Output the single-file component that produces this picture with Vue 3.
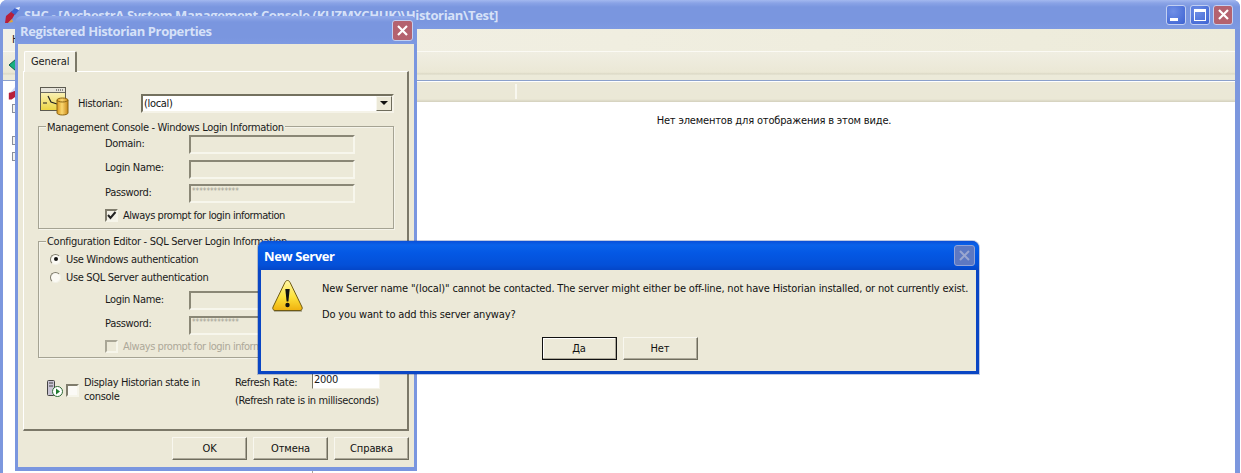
<script setup>
const loginFields = ['Domain:', 'Login Name:', 'Password:']
const sqlFields = ['Login Name:', 'Password:']
const maskedValue = '*************'
</script>

<template>
  <div class="desktop">
    <!-- Main console window -->
    <div class="win main-win">
      <div class="titlebar main-title">
        <svg class="app-logo" width="17" height="17" viewBox="0 0 17 17">
          <path d="M0 16 L1 9 L7 4 L10 7 L7 12 L3 16 Z" fill="#b81f3a" />
          <path d="M3 16 L7 12 L8 15 Z" fill="#e2a23a" />
          <path d="M6 5 L10 1 L14 3 L10 8 Z" fill="#3c62cf" />
          <path d="M10 1 L15 0 L14 3 Z" fill="#eef3fd" />
        </svg>
        <span class="main-title-text">SHC - [ArchestrA System Management Console (KUZMYCHUK)\Historian\Test]</span>
        <div class="caption-btns">
          <div class="cap cap-blue"><i class="min-glyph"></i></div>
          <div class="cap cap-blue"><i class="max-glyph"></i></div>
          <div class="cap cap-red">
            <svg width="13" height="13" viewBox="0 0 13 13"><path d="M2 2 L11 11 M11 2 L2 11" stroke="#fff" stroke-width="2.2" /></svg>
          </div>
        </div>
      </div>
      <div class="menubar"><span class="menu-item">Н</span></div>
      <div class="toolbar">
        <svg class="back-arrow" width="10" height="12" viewBox="0 0 10 12"><path d="M0 6 L7 0 V12 Z" fill="#18b080" stroke="#0c5a46" /></svg>
      </div>
      <div class="content">
        <div class="tree">
          <svg class="tree-logo" width="16" height="17" viewBox="0 0 17 17">
            <path d="M3 16 L3 9 L9 6 L13 9 L10 13 L6 16 Z" fill="#b81f3a" />
            <path d="M4 9 L11 1 L16 0 L14 6 L9 7 Z" fill="#cfdaf6" />
          </svg>
          <i class="expander e1"></i>
          <i class="expander e2"></i>
          <i class="expander e3"></i>
        </div>
        <div class="pane">
          <div class="list-header"><div class="col-a"></div><div class="col-b"></div></div>
          <div class="empty-msg">Нет элементов для отображения в этом виде.</div>
        </div>
      </div>
    </div>

    <!-- Registered Historian Properties -->
    <div class="win props-win">
      <div class="titlebar props-title">
        <span>Registered Historian Properties</span>
        <div class="cap cap-red props-close">
          <svg width="13" height="13" viewBox="0 0 13 13"><path d="M2 2 L11 11 M11 2 L2 11" stroke="#fff" stroke-width="2.2" /></svg>
        </div>
      </div>
      <div class="props-body">
        <div class="tab">General</div>
        <div class="panel">
          <div class="historian-row">
            <svg class="hist-icon" width="30" height="30" viewBox="0 0 30 30">
              <defs>
                <linearGradient id="winFill" x1="0" y1="0" x2="0" y2="1">
                  <stop offset="0" stop-color="#fdf9d8" />
                  <stop offset="1" stop-color="#ecd440" />
                </linearGradient>
                <linearGradient id="cylFill" x1="0" y1="0" x2="1" y2="0">
                  <stop offset="0" stop-color="#d99a1e" />
                  <stop offset="0.45" stop-color="#fbd871" />
                  <stop offset="1" stop-color="#c98818" />
                </linearGradient>
              </defs>
              <rect x="0.5" y="0.5" width="25" height="23" fill="url(#winFill)" stroke="#5c5a50" />
              <rect x="1" y="1" width="24" height="4" fill="#e6e4da" />
              <path d="M16 3 h8" stroke="#333" stroke-dasharray="1 1" />
              <path d="M1 5.5 H25" stroke="#6a6a60" />
              <path d="M8 9 L11 15 L17 17 M3 16 L7 16" stroke="#222" fill="none" stroke-width="1.2" />
              <path d="M17 13 a5.5 2 0 0 1 11 0 V26 a5.5 2 0 0 1 -11 0 Z" fill="url(#cylFill)" stroke="#8a6414" />
              <path d="M17 13 a5.5 2 0 0 0 11 0" fill="none" stroke="#8a6414" />
            </svg>
            <label class="hist-label">Historian:</label>
            <div class="combo">
              <span>(local)</span>
              <div class="combo-btn"><i></i></div>
            </div>
          </div>

          <div class="group group-one">
            <span class="legend">Management Console - Windows Login Information</span>
            <div v-for="name in loginFields" :key="name" class="field-row">
              <label>{{ name }}</label>
              <div class="field"><span v-if="name === 'Password:'" class="mask">{{ maskedValue }}</span></div>
            </div>
            <div class="check-row indented">
              <div class="check"><svg width="11" height="11" viewBox="0 0 11 11"><path d="M2 5 L4.5 8 L9.5 2" fill="none" stroke="#222" stroke-width="2" /></svg></div>
              <span>Always prompt for login information</span>
            </div>
          </div>

          <div class="group group-two">
            <span class="legend">Configuration Editor - SQL Server Login Information</span>
            <div class="radio-row"><div class="radio on"></div><span>Use Windows authentication</span></div>
            <div class="radio-row"><div class="radio"></div><span>Use SQL Server authentication</span></div>
            <div v-for="name in sqlFields" :key="name" class="field-row">
              <label>{{ name }}</label>
              <div class="field"><span v-if="name === 'Password:'" class="mask">{{ maskedValue }}</span></div>
            </div>
            <div class="check-row indented disabled">
              <div class="check"></div>
              <span>Always prompt for login information</span>
            </div>
          </div>

          <div class="bottom-row">
            <div class="state-col">
              <svg class="state-icon" width="16" height="18" viewBox="0 0 16 18">
                <rect x="0.5" y="0.5" width="7" height="15" rx="1" fill="#c9c4d4" stroke="#444" />
                <path d="M2 3 h4 M2 6 h4" stroke="#444" />
                <circle cx="10.5" cy="11.5" r="5" fill="#fff" stroke="#2c6a34" />
                <path d="M9 8.5 L13 11.5 L9 14.5 Z" fill="#1f7a2e" />
              </svg>
              <div class="check sunken-light"></div>
              <span class="state-label">Display Historian state in console</span>
            </div>
            <div class="refresh-col">
              <div class="refresh-line">
                <label>Refresh Rate:</label>
                <div class="rate-input">2000</div>
              </div>
              <div class="refresh-note">(Refresh rate is in milliseconds)</div>
            </div>
          </div>
        </div>
        <div class="props-footer">
          <button class="btn" type="button">OK</button>
          <button class="btn" type="button">Отмена</button>
          <button class="btn" type="button">Справка</button>
        </div>
      </div>
    </div>

    <!-- New Server message box -->
    <div class="win msg-win">
      <div class="titlebar msg-title">
        <span>New Server</span>
        <div class="cap msg-close">
          <svg width="13" height="13" viewBox="0 0 13 13"><path d="M2 2 L11 11 M11 2 L2 11" stroke="#9aa6cf" stroke-width="2" /></svg>
        </div>
      </div>
      <div class="msg-body">
        <div class="msg-main">
          <svg class="warn" width="33" height="35" viewBox="0 0 33 35">
            <defs>
              <linearGradient id="warnFill" x1="0" y1="0" x2="0" y2="1">
                <stop offset="0" stop-color="#fff6a6" />
                <stop offset="0.55" stop-color="#fde23a" />
                <stop offset="1" stop-color="#efb00e" />
              </linearGradient>
            </defs>
            <path d="M3 33 H31" stroke="#a8a48f" stroke-width="1.6" />
            <path d="M16.5 2.5 C18 2.5 18.5 3.5 19.1 4.5 L31 29 C31.8 31 30.6 32.5 29 32.5 H4 C2.4 32.5 1.2 31 2 29 L13.9 4.5 C14.5 3.5 15 2.5 16.5 2.5 Z" fill="url(#warnFill)" stroke="#6f5a12" />
            <path d="M14.3 11 H18.7 L17.4 23.5 H15.6 Z" fill="#111" />
            <circle cx="16.5" cy="27" r="2.2" fill="#111" />
          </svg>
          <div class="msg-text">
            <p>New Server name "(local)" cannot be contacted. The server might either be off-line, not have Historian installed, or not currently exist.</p>
            <p>Do you want to add this server anyway?</p>
          </div>
        </div>
        <div class="msg-btns">
          <button class="btn default" type="button">Да</button>
          <button class="btn" type="button">Нет</button>
        </div>
      </div>
    </div>
  </div>
</template>

<style scoped>
.desktop {
  position: relative;
  width: 1241px;
  height: 473px;
  overflow: hidden;
  background: #fff;
  font-family: "DejaVu Sans Condensed", "DejaVu Sans", sans-serif;
  font-size: 11px;
  color: #1a1a1a;
}
.win { position: absolute; box-sizing: border-box; }

.titlebar {
  display: flex; align-items: center; box-sizing: border-box;
  font-weight: 700; font-family: "Open Sans", "DejaVu Sans", sans-serif;
  font-size: 13px; letter-spacing: -0.4px;
}

/* main window */
.main-win {
  left: 0; top: 0; width: 1240px; height: 473px;
  display: flex; flex-direction: column;
  background: #7c97de;
  border-radius: 7px 7px 0 0;
  padding: 0 5px 0 3px;
}
.main-title {
  height: 29px; flex: none;
  margin: 0 -5px 0 -3px;
  padding: 1px 7px 0 5px;
  border-radius: 7px 7px 0 0;
  background: linear-gradient(#a3b8ef 0, #8aa3e6 3px, #7a96df 7px, #7a96df 22px, #7e9ae2 100%);
  color: #d6e1f8;
}
.app-logo { margin-right: 2px; flex: none; }
.main-title-text { white-space: nowrap; letter-spacing: -0.34px; }
.caption-btns { margin-left: auto; display: flex; gap: 3.5px; margin-top: -1px; }
.cap {
  width: 20px; height: 20px; box-sizing: border-box;
  border: 1px solid #c3d0f2; border-radius: 3px;
  display: flex; align-items: center; justify-content: center;
}
.cap-blue { background: radial-gradient(circle at 35% 30%, #6f8fe6, #3c62d2); position: relative; }
.cap-red { background: #b4626f; }
.min-glyph { width: 8px; height: 3px; background: #fff; margin: 10px 4px 0 0; }
.max-glyph { width: 12px; height: 12px; box-sizing: border-box; border: 1px solid #fff; border-top-width: 3px; }

.menubar {
  height: 23px; flex: none; box-sizing: border-box;
  background: linear-gradient(90deg, #f2f0e6, #f0eee0 50%, #edebda);
  border-bottom: 1px solid #fbfaf4;
  padding: 4px 0 0 9px;
}
.menu-item { color: #222; }
.toolbar {
  height: 29px; flex: none; box-sizing: border-box;
  background: linear-gradient(#f0eee2, #ebe8d6 70%, #e6e3d0 76%, #d5d2bf 78%, #ecead9 82%);
  border-bottom: 1px solid #8ba0cb;
  padding: 5px 0 0 6px;
}
.back-arrow { display: block; margin-top: 2px; }
.content { flex: 1; display: flex; min-height: 0; background: #fff; border-top: 1px solid #fff; }
.tree {
  width: 309px; flex: none; position: relative; box-sizing: content-box;
  border-right: 1px solid #aca899;
}
.tree-logo { position: absolute; left: 3px; top: 2px; }
.expander {
  position: absolute; left: 9px; width: 7px; height: 7px;
  border: 1px solid #8a8f9a; background: #f4f4f0;
}
.e1 { top: 22px; }
.e2 { top: 54px; }
.e3 { top: 70px; }
.pane { flex: 1; min-width: 0; display: flex; flex-direction: column; }
.list-header {
  height: 20px; flex: none; display: flex; box-sizing: border-box;
  background: linear-gradient(#ebe8d8, #ebe8d6 85%, #d3d0bd);
}
.col-a { width: 202px; flex: none; border-right: 2px solid #f8f7ef; margin: 2px 0 3px; }
.col-b { flex: 1; }
.empty-msg { text-align: center; padding-top: 12px; color: #111; letter-spacing: -0.17px; }

/* properties dialog */
.props-win {
  left: 15px; top: 16px; width: 402px; height: 455px;
  background: #7a96df;
  border-radius: 7px 7px 0 0;
  display: flex; flex-direction: column;
  padding: 0 3px 4px;
}
.props-title {
  height: 28px; flex: none;
  margin: 0 -3px;
  padding: 1px 4px 0 5px;
  justify-content: space-between;
  border-radius: 7px 7px 0 0;
  background: linear-gradient(#92aaea, #7a96df 6px, #7a96df 22px, #7e9ae2);
  color: #d6e1f8;
}
.props-close { width: 21px; height: 21px; }
.props-body {
  flex: 1; min-height: 0; background: #ece9d8;
  padding: 7px 0 0 5px;
  display: flex; flex-direction: column;
  position: relative;
  letter-spacing: -0.33px;
}
.tab {
  width: 53px; height: 21px; box-sizing: border-box; flex: none;
  margin-left: 1px;
  padding: 3px 0 0 6px;
  background: #f0eee2;
  border: 1px solid #fff;
  border-right: 2px solid #7b7868;
  border-bottom: none;
  border-radius: 2px 2px 0 0;
  position: relative; z-index: 1;
  margin-bottom: -1px;
  letter-spacing: -0.1px;
}
.panel {
  width: 386px; height: 360px; box-sizing: border-box; flex: none;
  border-left: 1px solid #fff;
  border-top: 1px solid #fff;
  border-right: 2px solid #7b7868;
  border-bottom: 2px solid #7b7868;
  padding: 22px 0 0 14px;
}
.historian-row { display: flex; align-items: center; height: 18px; margin-bottom: 14px; }
.hist-icon { flex: none; margin: -3px 8px 0 2px; width: 30px; }
.hist-label { width: 63px; flex: none; }
.combo {
  width: 253px; height: 19px; box-sizing: border-box; flex: none;
  background: #fff;
  border: 2px solid; border-color: #74715f #f5f3e8 #f5f3e8 #74715f;
  display: flex; align-items: center; padding-left: 1px; justify-content: space-between;
  color: #111;
}
.combo-btn {
  width: 16px; height: 15px; box-sizing: border-box;
  background: #ece9d8;
  border: 1px solid; border-color: #f8f7ef #6e6c5c #6e6c5c #f8f7ef;
  display: flex; align-items: center; justify-content: center;
}
.combo-btn i {
  width: 0; height: 0;
  border-left: 4px solid transparent; border-right: 4px solid transparent;
  border-top: 4px solid #111;
}

.group {
  position: relative; box-sizing: border-box; width: 356px;
  border: 1px solid #a5a393;
  box-shadow: inset 1px 1px 0 #f5f4ea, 1px 1px 0 #f5f4ea;
  padding: 8px 0 0 66px;
}
.group-one { height: 103px; margin-bottom: 12px; }
.group-two { height: 117px; padding-top: 8px; }
.legend {
  position: absolute; left: 7px; top: -6px;
  background: #ece9d8; padding: 0 1px; white-space: nowrap; line-height: 13px;
}
.group-two .legend { top: -7px; letter-spacing: -0.29px; }
.field-row { display: flex; align-items: center; height: 19px; margin-bottom: 5.5px; }
.field-row label { width: 84px; flex: none; margin-top: -3px; }
.field {
  width: 166px; height: 19px; box-sizing: border-box;
  border: 2px solid; border-color: #8a8776 #f7f6ec #f7f6ec #8a8776;
  background: #ece9d8;
  display: flex; align-items: center;
}
.mask { font-size: 8px; color: #a3a195; letter-spacing: 0; padding-left: 1px; line-height: 8px; margin-top: -4px; }
.check-row { display: flex; align-items: center; gap: 5px; letter-spacing: -0.46px; }
.check {
  width: 13px; height: 13px; box-sizing: border-box; flex: none;
  border: 2px solid; border-color: #7f7c6c #f6f5ea #f6f5ea #7f7c6c;
  background: #f2f0e6;
  display: flex; align-items: center; justify-content: center;
}
.check svg { flex: none; margin: -1px; }
.disabled { color: #aca899; }
.disabled .check { background: #ece9d8; border-color: #a9a696 #f6f5ea #f6f5ea #a9a696; }
.radio-row {
  display: flex; align-items: center; gap: 5px; height: 18px;
  margin-left: -55px;
}
.radio {
  width: 11px; height: 11px; box-sizing: border-box; flex: none; border-radius: 50%;
  background: #fbfaf4;
  border: 1px solid; border-color: #7f7c6c #f2f1e6 #f2f1e6 #7f7c6c;
  position: relative;
}
.radio.on::after {
  content: ""; position: absolute; left: 2.5px; top: 2.5px;
  width: 4px; height: 4px; border-radius: 50%; background: #111;
}
.radio-row + .field-row { margin-top: 5px; }

.bottom-row { display: flex; margin: 15px 0 0 9px; }
.state-col { width: 188px; flex: none; display: flex; align-items: flex-start; padding-top: 7px; position: relative; }
.state-icon { flex: none; margin-right: 3px; }
.sunken-light { background: #fbfaf6; margin: 4px 5px 0 0; }
.state-label { width: 118px; line-height: 13.5px; margin-top: -4px; }
.refresh-col { width: 150px; flex: none; }
.refresh-line { display: flex; align-items: flex-start; }
.refresh-line label { width: 77px; flex: none; margin-top: 3px; }
.rate-input {
  width: 68px; height: 16px; box-sizing: border-box; flex: none;
  background: #fff;
  border: 1px solid; border-color: #74715f #f5f3e8 #f5f3e8 #74715f;
  padding-left: 1px; line-height: 12px;
}
.refresh-note { margin-top: 5px; white-space: nowrap; letter-spacing: -0.36px; }
.props-footer { display: flex; gap: 6px; margin: 6px 0 0 149px; }

.btn {
  width: 75px; height: 23px; box-sizing: border-box;
  background: #ece9d8;
  border: 1px solid; border-color: #f8f7ef #6f6d5d #6f6d5d #f8f7ef;
  box-shadow: inset -1px -1px 0 #aca899;
  font: inherit; color: #111; padding: 0;
  letter-spacing: -0.1px;
}

/* message box */
.msg-win {
  left: 258px; top: 241px; width: 721px; height: 133px;
  background: #0a46c4;
  border-radius: 7px 7px 0 0;
  padding: 0 3px 3px;
  display: flex; flex-direction: column;
  box-shadow: 0 0 0 1px rgba(0, 40, 140, 0.25);
}
.msg-title {
  height: 29px; flex: none;
  margin: 0 -3px;
  padding: 0 4px 0 6px;
  justify-content: space-between;
  border-radius: 7px 7px 0 0;
  background: linear-gradient(#0a4fd8, #0a62ea 4px, #0458e4 12px, #0450d8 24px, #0446c8);
  color: #fff;
}
.msg-close {
  width: 21px; height: 21px; margin-top: -1px;
  background: #5d78c2; border-color: #92a3d6;
}
.msg-body {
  flex: 1; min-height: 0; background: #ece9d8;
  padding: 10px 0 0 10px;
  display: flex; flex-direction: column;
}
.msg-main { display: flex; height: 48px; }
.warn { flex: none; margin: -2px 18px 0 0; }
.msg-text { padding-top: 2px; letter-spacing: -0.16px; }
.msg-text p { margin: 0 0 13px; line-height: 13px; white-space: nowrap; color: #111; }
.msg-btns { display: flex; justify-content: center; gap: 6px; margin-top: 9px; padding-right: 8px; }
.default { border: 1px solid #111; box-shadow: inset -1px -1px 0 #aca899, inset 1px 1px 0 #fff; }
</style>

<style>
html, body { margin: 0; background: #fff; overflow: hidden; }
</style>
